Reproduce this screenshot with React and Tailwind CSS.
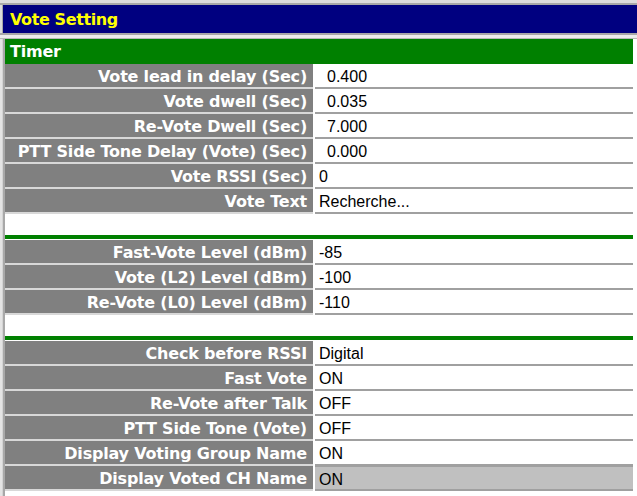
import React from 'react';

const timerRows = [
  { label: 'Vote lead in delay (Sec)', value: '0.400', indent: true },
  { label: 'Vote dwell (Sec)', value: '0.035', indent: true },
  { label: 'Re-Vote Dwell (Sec)', value: '7.000', indent: true },
  { label: 'PTT Side Tone Delay (Vote) (Sec)', value: '0.000', indent: true },
  { label: 'Vote RSSI (Sec)', value: '0' },
  { label: 'Vote Text', value: 'Recherche...' },
];

const levelRows = [
  { label: 'Fast-Vote Level (dBm)', value: '-85' },
  { label: 'Vote (L2) Level (dBm)', value: '-100' },
  { label: 'Re-Vote (L0) Level (dBm)', value: '-110' },
];

const optionRows = [
  { label: 'Check before RSSI', value: 'Digital' },
  { label: 'Fast Vote', value: 'ON' },
  { label: 'Re-Vote after Talk', value: 'OFF' },
  { label: 'PTT Side Tone (Vote)', value: 'OFF' },
  { label: 'Display Voting Group Name', value: 'ON' },
  { label: 'Display Voted CH Name', value: 'ON', selected: true },
];

function Row({ label, value, indent, selected }) {
  return (
    <div className="flex h-[25px]">
      <div className="w-[308px] h-[25px] bg-[#808080] border-b-2 border-[#d8d8d8] flex items-center justify-end pr-[6px] pt-[3px] text-white font-bold text-[16px] font-['DejaVu_Sans',sans-serif] tracking-[-0.2px] whitespace-nowrap">
        {label}
      </div>
      <div
        className={
          'flex-1 ml-[2px] h-[25px] border-b-2 border-[#a0a0a0] flex items-center pt-[3px] text-[16px] text-black font-["Liberation_Sans",Arial,sans-serif] ' +
          (selected ? 'bg-[#c0c0c0] border-t border-t-[#a0a0a0] ' : '') +
          (indent ? 'pl-[12px]' : 'pl-[4px]')
        }
      >
        {value}
      </div>
    </div>
  );
}

function Divider() {
  return (
    <div>
      <div className="h-[21px]" />
      <div className="h-[4px] bg-[#008000]" />
      <div className="h-[1px]" />
    </div>
  );
}

export default function App() {
  return (
    <div className="w-[637px] h-[496px] overflow-hidden bg-white">
      {/* window frame top */}
      <div className="h-[5px] bg-[#dcdcdc] border-b-2 border-[#a8a8a8]" />
      <div className="flex">
        <div className="w-[3px] h-[28px] bg-[#dcdcdc] border-r border-[#a8a8a8]" />
        <div className="flex-1 h-[28px] bg-[#000080] flex items-center pl-[7px] pt-[1px] text-[#ffff00] font-bold text-[16px] font-['DejaVu_Sans',sans-serif] tracking-[-0.4px]">
          Vote Setting
        </div>
      </div>
      <div className="h-[6px] border-t-2 border-[#a8a8a8] bg-[#ececec] border-b border-b-[#b8b8b8]" />

      <div className="flex">
        <div className="w-[5px] h-[457px] bg-[#d4d4d4] border-l-2 border-[#e4e4e4] border-r-2 border-r-[#a8a8a8]" />
        <div className="w-[628px]">
          <div className="h-[25px] bg-[#008000] flex items-center pl-[5px] pt-[1px] text-white font-bold text-[16px] font-['DejaVu_Sans',sans-serif] tracking-[-0.2px]">
            Timer
          </div>
          {timerRows.map((r) => (
            <Row key={r.label} {...r} />
          ))}
          <Divider />
          {levelRows.map((r) => (
            <Row key={r.label} {...r} />
          ))}
          <Divider />
          {optionRows.map((r) => (
            <Row key={r.label} {...r} />
          ))}
        </div>
      </div>
    </div>
  );
}
